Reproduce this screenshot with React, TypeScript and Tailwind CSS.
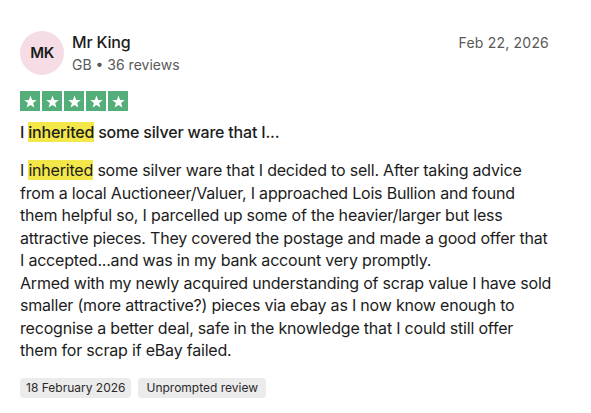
import React from "react";

function Star() {
  return (
    <div className="flex h-[20px] w-[20px] items-center justify-center bg-[#54ae7a]">
      <svg viewBox="0 0 24 24" className="h-[15px] w-[15px]" fill="#ffffff">
        <path d="M12 2.5l2.6 6.9 7.4.3-5.8 4.6 2 7.2L12 17.4l-6.2 4.1 2-7.2L2 9.7l7.4-.3z" />
      </svg>
    </div>
  );
}

function Hl({ children }: { children: React.ReactNode }) {
  return <span className="bg-[#f3e749]">{children}</span>;
}

export default function App() {
  return (
    <div
      className="min-h-screen bg-white px-5 pt-[31px] text-[#1c1c1c]"
      style={{ fontFamily: "Inter, 'Liberation Sans', sans-serif" }}
    >
      {/* Header */}
      <div className="flex items-start justify-between">
        <div className="flex items-center gap-[8px]">
          <div className="flex h-[44px] w-[44px] items-center justify-center rounded-full bg-[#f6dce4] text-[15px] font-semibold tracking-tight text-[#1c1c1c]">
            MK
          </div>
          <div className="flex flex-col">
            <span className="text-[16px] font-medium leading-[22px] tracking-[-0.2px]">Mr King</span>
            <span className="mt-[2px] text-[14px] leading-[20px] text-[#595959]">GB • 36 reviews</span>
          </div>
        </div>
        <span className="mr-[22px] pt-[2px] text-[14px] leading-[20px] tracking-[0.2px] text-[#595959]">
          Feb 22, 2026
        </span>
      </div>

      {/* Stars */}
      <div className="mt-[16px] flex gap-[2px]">
        <Star />
        <Star />
        <Star />
        <Star />
        <Star />
      </div>

      {/* Title */}
      <h2 className="mt-[10px] text-[16px] font-medium leading-[22px] tracking-[-0.2px]">
        I <Hl>inherited</Hl> some silver ware that I...
      </h2>

      {/* Body */}
      <p className="mt-[16px] max-w-[534px] text-[16px] leading-[22.5px] tracking-[-0.2px]">
        I <Hl>inherited</Hl> some silver ware that I decided to sell. After taking advice from a local
        Auctioneer/Valuer, I approached Lois Bullion and found them helpful so, I parcelled up some of
        the heavier/larger but less attractive pieces. They covered the postage and made a good offer
        that I accepted...and was in my bank account very promptly.
        <br />
        Armed with my newly acquired understanding of scrap value I have sold smaller (more
        attractive?) pieces via ebay as I now know enough to recognise a better deal, safe in the
        knowledge that I could still offer them for scrap if eBay failed.
      </p>

      {/* Tags */}
      <div className="mt-[16px] flex gap-[7px]">
        <span className="rounded-[4px] bg-[#ebebeb] px-[6px] py-[2px] text-[12px] leading-[16px] text-[#2a2a2a]">
          18 February 2026
        </span>
        <span className="rounded-[4px] bg-[#ebebeb] px-[8px] py-[2px] text-[12px] leading-[16px] text-[#2a2a2a]">
          Unprompted review
        </span>
      </div>
    </div>
  );
}
